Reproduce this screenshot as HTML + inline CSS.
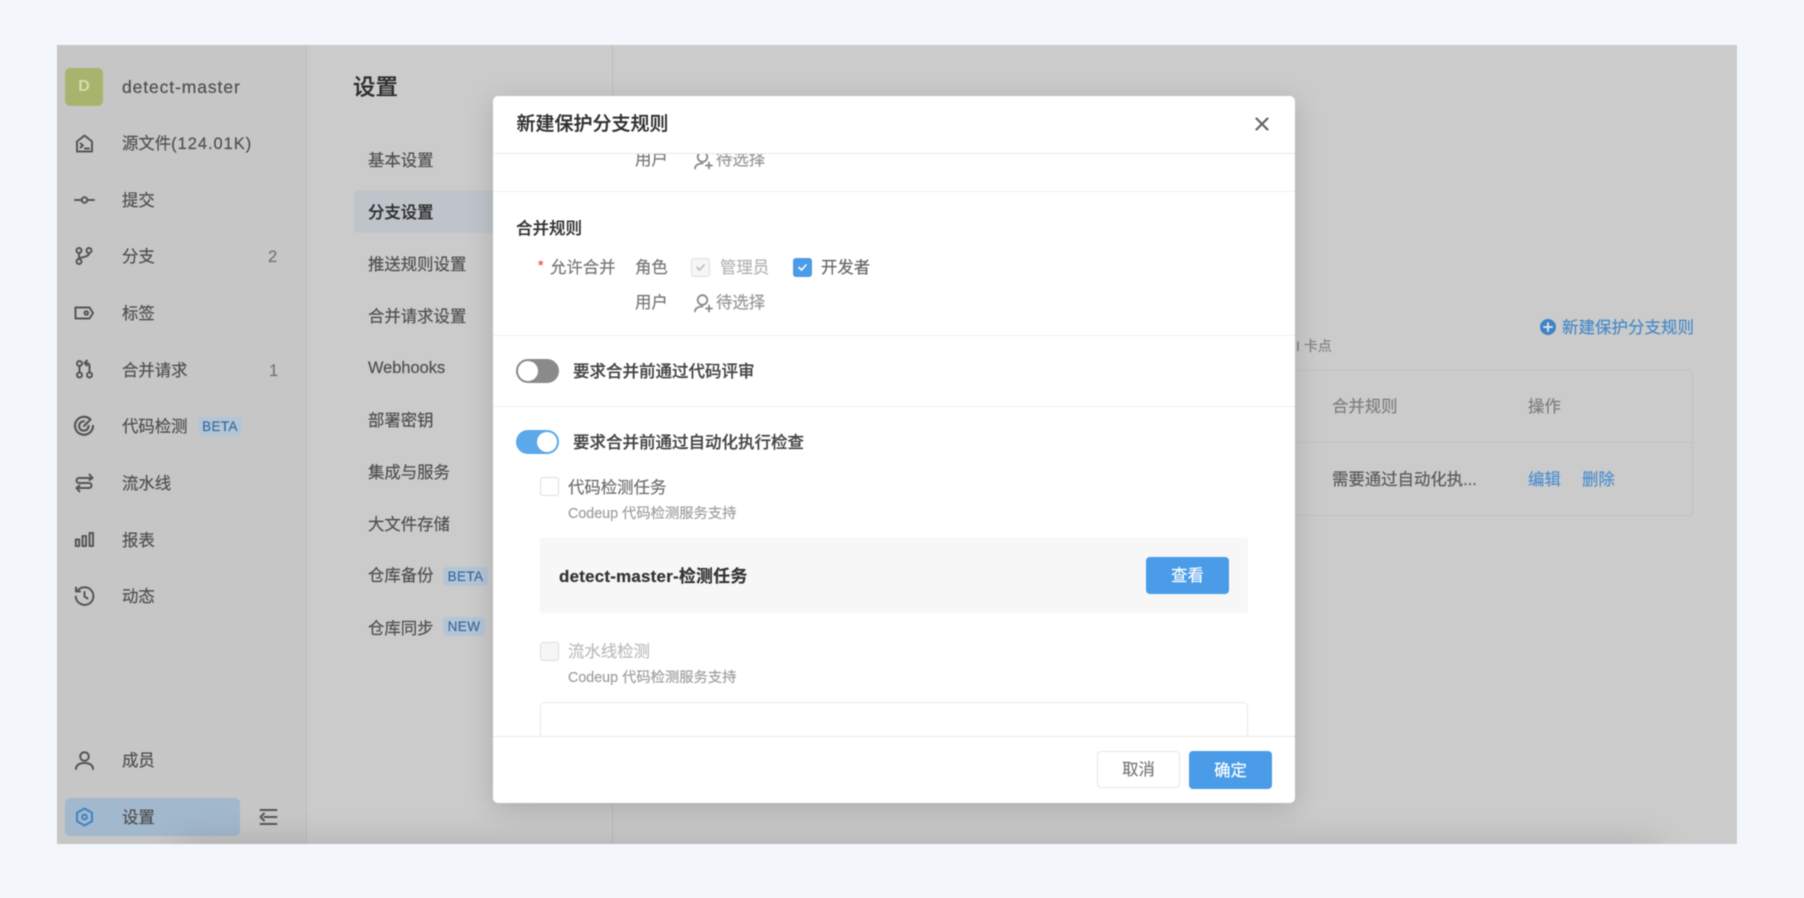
<!DOCTYPE html>
<html lang="zh"><head><meta charset="utf-8"><title>设置</title>
<style>
*{box-sizing:border-box}
html,body{margin:0;padding:0}
html{background:#f3f7fb}
body{width:1804px;height:898px;background:#f3f7fb;overflow:hidden;position:relative;font-family:"Liberation Sans","Noto Sans CJK SC",sans-serif;color:#505050;filter:blur(.45px)}
.t{position:absolute;white-space:nowrap;line-height:20px;font-size:16.4px;-webkit-text-stroke:.2px currentColor}
.app{position:absolute;left:57px;top:45px;width:1680px;height:799px;background:#cbcbcb;overflow:hidden}
.side{position:absolute;left:0;top:0;width:250px;height:799px;background:#c6c6c6;border-right:1px solid #bdbdbd}
.glow{position:absolute;left:120px;top:799px;width:1480px;height:30px;box-shadow:0 0 34px rgba(0,0,0,.16)}
.abs{position:absolute}
svg.ic{position:absolute;left:0;top:0;width:1804px;height:898px;fill:none;stroke-linecap:round;stroke-linejoin:round}
.badge{position:absolute;height:19px;border-radius:4px;background:#b4c5d6;color:#3a6c9f;font-size:13.5px;line-height:19px;text-align:center;letter-spacing:.4px;-webkit-text-stroke:.2px currentColor}
.modal{position:absolute;left:493px;top:96px;width:802px;height:707px;background:#fff;border-radius:5px;box-shadow:0 6px 28px rgba(0,0,0,.16)}
.line{position:absolute;left:493px;width:802px;height:1px;background:#f0f0f0}
.cb{position:absolute;width:19px;height:19px;border-radius:3px;border:1px solid #dedede;background:#fff}
.cb.dis{background:#f6f6f6}
.cb.on{background:#4a9ce8;border-color:#4a9ce8}
.cb svg{position:absolute;left:3px;top:3px;width:11px;height:11px;fill:none;stroke-width:1.6;stroke-linecap:round;stroke-linejoin:round}
.tg{position:absolute;left:516px;width:43px;height:24px;border-radius:12px}
.tg i{position:absolute;top:2px;width:20px;height:20px;background:#fff;border-radius:50%}
.btn{position:absolute;border-radius:4px;text-align:center;font-size:16.4px;-webkit-text-stroke:.15px currentColor}
.blue{background:#4a9ce8;color:#fff}
</style></head>
<body>
<div class="app">
  <div class="side"></div>
  <div class="abs" style="left:555px;top:0;width:1px;height:799px;background:#bdbdbd"></div>
  <div class="abs" style="left:297px;top:145px;width:150px;height:43px;background:#bec4ca;border-radius:5px"></div>
  <div class="abs" style="left:8px;top:753px;width:175px;height:38px;background:#a2b8cc;border-radius:5px"></div>
  <div class="abs" style="left:1000px;top:325px;width:636px;height:146px;border:1px solid #c1c1c1;border-radius:4px"></div>
  <div class="abs" style="left:1000px;top:397px;width:636px;height:1px;background:#c1c1c1"></div>
  <div class="glow"></div>
</div>

<div class="abs" style="left:65px;top:68px;width:38px;height:38px;background:#a8b46e;border-radius:5px;color:#d3dcaa;font-size:16px;font-weight:bold;line-height:38px;text-align:center">D</div>
<div class="t" style="left:122px;top:77px;font-size:17.5px;letter-spacing:.9px">detect-master</div>
<div class="t" style="left:122px;top:134px">源文件<span style="letter-spacing:1px">(124.01K)</span></div>
<div class="t" style="left:122px;top:191px">提交</div>
<div class="t" style="left:122px;top:247px">分支</div>
<div class="t" style="left:268px;top:247px;color:#777">2</div>
<div class="t" style="left:122px;top:361px">合并请求</div>
<div class="t" style="left:122px;top:304px">标签</div>
<div class="t" style="left:269px;top:361px;color:#777">1</div>
<div class="t" style="left:122px;top:417px">代码检测</div>
<div class="badge" style="left:198px;top:417px;width:44px">BETA</div>
<div class="t" style="left:122px;top:474px">流水线</div>
<div class="t" style="left:122px;top:531px">报表</div>
<div class="t" style="left:122px;top:587px">动态</div>
<div class="t" style="left:122px;top:751px">成员</div>
<div class="t" style="left:122px;top:808px">设置</div>

<svg class="ic" viewBox="0 0 1804 898" stroke="#565656" stroke-width="2">
  <path d="M77 151.5V141.5L84.5 135.5L92 141.5V151.5Z"/><path d="M80.5 143.5l2.5 2-2.5 2M85 148.5h4"/>
  <path d="M75 200h6M88 200h6"/><circle cx="84.5" cy="200" r="2.8"/>
  <circle cx="79" cy="250.5" r="2.5"/><circle cx="89" cy="250.5" r="2.5"/><circle cx="79" cy="261.5" r="2.5"/>
  <path d="M79 253.2V259M89 253.2c0 4.5-10 3.5-10 6"/>
  <path d="M75.5 307.5H89.5L93 313L89.5 318.5H75.5Z"/><circle cx="86.3" cy="313" r="1.8"/>
  <circle cx="79.5" cy="363.5" r="2.5"/><circle cx="79.5" cy="375" r="2.5"/><circle cx="89.5" cy="375" r="2.5"/>
  <path d="M79.5 366.2V372.4M89.5 372.4V366c0-2-1-3-3.5-3M87 360.5l-2.5 2.5 2.5 2.5"/>
  <g stroke-width="2.2"><path d="M90.5 419.5A9 9 0 1 0 93 426"/><path d="M88.5 426a4.7 4.7 0 1 1-4.5-4.7"/><path d="M84 426l6-6"/></g>
  <path d="M92 478H79a2.5 2.5 0 0 0 0 5h10a2.5 2.5 0 0 1 0 5H76.5"/>
  <path d="M89.5 474.5L92.5 478 89.5 480M79.5 485.5L76.500 488 79.500 491.500"/>
  <rect x="75.800" y="539.500" width="3.400" height="6.500"/><rect x="82.500" y="536" width="3.500" height="10"/><rect x="89.500" y="533" width="3.500" height="13"/>
  <path d="M77.800 590.500a8.800 8.800 0 1 1-2 6"/><path d="M76 587.500v4h4"/><path d="M84.500 592v4.500l3 2"/>
  <circle cx="84.500" cy="756.500" r="4.300"/><path d="M76 769c0-4 3.800-6 8.500-6s8.500 2 8.500 6"/>
  <path d="M84.500 808.500l7.500 4.200v8.600l-7.500 4.200-7.500-4.200v-8.600z" stroke="#3f83c4"/><circle cx="84.500" cy="817" r="2.400" stroke="#3f83c4"/>
  <path d="M260.500 810h16M264.500 817h12M260.500 824h16M264 813.500L260.500 817l3.500 3.500"/>
</svg>

<div class="t" style="left:353px;top:78px;font-size:22.5px;color:#2d2d2d;font-weight:500">设置</div>
<div class="t" style="left:368px;top:151px">基本设置</div>
<div class="t" style="left:368px;top:203px;color:#2f2f2f;font-weight:500">分支设置</div>
<div class="t" style="left:368px;top:255px">推送规则设置</div>
<div class="t" style="left:368px;top:307px">合并请求设置</div>
<div class="t" style="left:368px;top:358px">Webhooks</div>
<div class="t" style="left:368px;top:411px">部署密钥</div>
<div class="t" style="left:368px;top:463px">集成与服务</div>
<div class="t" style="left:368px;top:515px">大文件存储</div>
<div class="t" style="left:368px;top:566px">仓库备份</div>
<div class="badge" style="left:443px;top:567px;width:45px">BETA</div>
<div class="t" style="left:368px;top:619px">仓库同步</div>
<div class="badge" style="left:443px;top:617px;width:42px">NEW</div>

<svg class="ic" viewBox="0 0 1804 898"><circle cx="1548" cy="327" r="8" fill="#3f83c4"/><path d="M1544 327h8M1548 323v8" stroke="#d5dfe9" stroke-width="2"/></svg>
<div class="t" style="left:1562px;top:318px;font-size:16.5px;color:#4a8bc8">新建保护分支规则</div>
<div class="t" style="left:1296px;top:336px;font-size:14px;color:#858585">I&nbsp;卡点</div>
<div class="t" style="left:1332px;top:397px;color:#7f7f7f">合并规则</div>
<div class="t" style="left:1528px;top:397px;color:#7f7f7f">操作</div>
<div class="t" style="left:1332px;top:470px;color:#5a5a5a">需要通过自动化执...</div>
<div class="t" style="left:1528px;top:470px;color:#4f91cf">编辑</div>
<div class="t" style="left:1582px;top:470px;color:#4f91cf">删除</div>

<div class="modal"></div>
<div class="t" style="left:516.500px;top:115px;font-size:19px;color:#2d2d2d;font-weight:500">新建保护分支规则</div>
<svg class="ic" viewBox="0 0 1804 898" stroke="#666" stroke-width="2.2"><path d="M1256.500 118.500l11 11M1267.500 118.500l-11 11"/></svg>
<div class="line" style="top:153px;background:#e9e9e9"></div>

<div class="abs" style="left:493px;top:154px;width:802px;height:30px;overflow:hidden">
  <div class="t" style="left:142px;top:-4px;color:#777">用户</div>
  <div class="t" style="left:223px;top:-4px;color:#999">待选择</div>
  <svg class="ic" viewBox="0 0 1804 898" style="left:-493px;top:-297px" stroke="#888" stroke-width="1.8"><circle cx="702.500" cy="300" r="4.800"/><path d="M695 311.500c0-3 3-5 7.500-5M709 305.500v6M706 308.500h6"/></svg>
</div>
<div class="line" style="top:191px"></div>

<div class="t" style="left:516px;top:219px;font-size:16.5px;color:#333;font-weight:500">合并规则</div>
<div class="t" style="left:538px;top:255px;color:#e5484d;font-size:14px">*</div>
<div class="t" style="left:550px;top:258px;color:#777">允许合并</div>
<div class="t" style="left:635px;top:258px;color:#777">角色</div>
<div class="cb dis" style="left:691px;top:258px"><svg viewBox="0 0 11 11" stroke="#bbb"><path d="M2 5.500l2.500 2.500 4.500-5"/></svg></div>
<div class="t" style="left:720px;top:258px;color:#b5b5b5">管理员</div>
<div class="cb on" style="left:793px;top:258px"><svg viewBox="0 0 11 11" stroke="#fff"><path d="M2 5.500l2.500 2.500 4.500-5"/></svg></div>
<div class="t" style="left:821px;top:258px;color:#666">开发者</div>
<div class="t" style="left:635px;top:293px;color:#777">用户</div>
<svg class="ic" viewBox="0 0 1804 898" stroke="#888" stroke-width="1.8"><circle cx="702.500" cy="300" r="4.800"/><path d="M695 311.500c0-3 3-5 7.500-5M709 305.500v6M706 308.500h6"/></svg>
<div class="t" style="left:716px;top:293px;color:#999">待选择</div>
<div class="line" style="top:335px"></div>

<div class="tg" style="top:359px;background:#8a8a8a"><i style="left:2px"></i></div>
<div class="t" style="left:573px;top:362px;color:#444;font-size:16.5px;font-weight:500">要求合并前通过代码评审</div>
<div class="line" style="top:406px"></div>
<div class="tg" style="top:430px;background:#5ba8ea"><i style="right:2px"></i></div>
<div class="t" style="left:573px;top:433px;color:#444;font-size:16.5px;font-weight:500">要求合并前通过自动化执行检查</div>

<div class="cb" style="left:540px;top:477px"></div>
<div class="t" style="left:568px;top:478px;color:#707070">代码检测任务</div>
<div class="t" style="left:568px;top:504px;font-size:14.3px;color:#a0a0a0">Codeup 代码检测服务支持</div>
<div class="abs" style="left:540px;top:538px;width:708px;height:75px;background:#f7f7f7"></div>
<div class="t" style="left:559px;top:567px;font-size:16.9px;color:#333;font-weight:bold;letter-spacing:.25px">detect-master-检测任务</div>
<div class="btn blue" style="left:1146px;top:557px;width:83px;height:37px;line-height:39px">查看</div>
<div class="cb dis" style="left:540px;top:642px"></div>
<div class="t" style="left:568px;top:642px;color:#bdbdbd">流水线检测</div>
<div class="t" style="left:568px;top:668px;font-size:14.3px;color:#a0a0a0">Codeup 代码检测服务支持</div>
<div class="abs" style="left:540px;top:702px;width:708px;height:34px;border:1px solid #e9e9e9;border-bottom:0;border-radius:5px 5px 0 0"></div>
<div class="line" style="top:736px;background:#e9e9e9"></div>
<div class="btn" style="left:1097px;top:751px;width:83px;height:37px;line-height:37px;border:1px solid #e6e6e6;color:#777;background:#fff">取消</div>
<div class="btn blue" style="left:1189px;top:751px;width:83px;height:38px;line-height:40px">确定</div>
</body></html>
